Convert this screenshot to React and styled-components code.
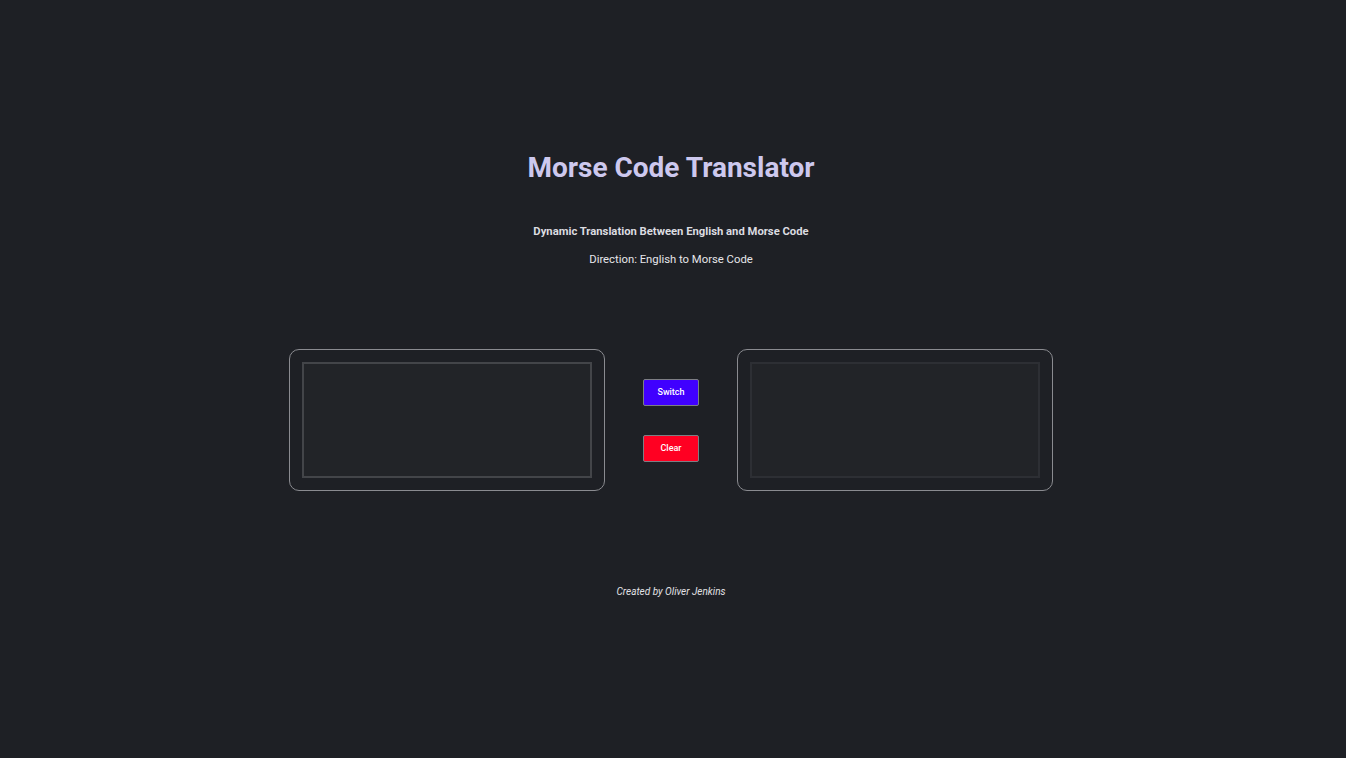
import React, { useState } from "react";
import styled, { createGlobalStyle } from "styled-components";

const MORSE = {
  a: ".-", b: "-...", c: "-.-.", d: "-..", e: ".", f: "..-.", g: "--.", h: "....",
  i: "..", j: ".---", k: "-.-", l: ".-..", m: "--", n: "-.", o: "---", p: ".--.",
  q: "--.-", r: ".-.", s: "...", t: "-", u: "..-", v: "...-", w: ".--", x: "-..-",
  y: "-.--", z: "--..", 0: "-----", 1: ".----", 2: "..---", 3: "...--", 4: "....-",
  5: ".....", 6: "-....", 7: "--...", 8: "---..", 9: "----.", " ": "/",
};
const REVERSE = Object.fromEntries(Object.entries(MORSE).map(([k, v]) => [v, k]));

const Global = createGlobalStyle`
  html, body { margin: 0; padding: 0; background: #1e2025; }
  body { font-family: Roboto, "Liberation Sans", Arial, sans-serif; }
  * { box-sizing: border-box; }
`;

const Page = styled.div`
  min-height: 100vh;
  background: #1e2025;
  display: flex;
  flex-direction: column;
  align-items: center;
  padding-right: 4px;
  color: #e4e4e8;
`;

const Title = styled.h1`
  margin: 151px 0 0;
  font-size: 28px;
  line-height: 34px;
  font-weight: 700;
  color: #cdc8ee;
`;

const Subtitle = styled.p`
  margin: ${(p) => p.$top}px 0 0;
  font-size: ${(p) => p.$size}px;
  line-height: 14px;
  font-weight: ${(p) => (p.$bold ? 700 : 400)};
  color: ${(p) => (p.$bold ? "#dcdce0" : "#e6e6ea")};
`;

const Workspace = styled.div`
  margin-top: 82px;
  display: flex;
  align-items: center;
  gap: 38px;
`;

const Panel = styled.div`
  width: 316px;
  height: 142px;
  padding: 12px;
  border: 1px solid #8a8b90;
  border-radius: 10px;
  background: #1e2025;
`;

const Area = styled.textarea`
  display: block;
  width: 100%;
  height: 100%;
  resize: none;
  background: #222428;
  border: 2px solid ${(p) => (p.$muted ? "#2d2f34" : "#434549")};
  color: #e4e4e8;
  font-family: Roboto, "Liberation Sans", Arial, sans-serif;
  font-size: 12px;
  padding: 6px;
  outline: none;
`;

const Controls = styled.div`
  display: flex;
  flex-direction: column;
  gap: 29px;
`;

const Button = styled.button`
  width: 56px;
  height: 27px;
  padding: 0;
  border: 1px solid #7d7e84;
  border-radius: 2px;
  background: ${(p) => p.$bg};
  color: #ffffff;
  font-family: Roboto, "Liberation Sans", Arial, sans-serif;
  font-size: 9px;
  font-weight: 500;
  cursor: pointer;
`;

const Footer = styled.p`
  margin: 95px 0 0;
  font-size: 10px;
  line-height: 12px;
  font-style: italic;
  color: #e2e2e6;
`;

export default function App() {
  const [toMorse, setToMorse] = useState(true);
  const [input, setInput] = useState("");

  const output = toMorse
    ? input.toLowerCase().split("").map((c) => MORSE[c] || "").join(" ")
    : input.trim().split(" ").map((c) => REVERSE[c] || "").join("");

  return (
    <>
      <Global />
      <Page>
        <Title>Morse Code Translator</Title>
        <Subtitle $bold $size={11.25} $top={40}>Dynamic Translation Between English and Morse Code</Subtitle>
        <Subtitle $size={11.3} $top={14}>
          Direction: {toMorse ? "English to Morse Code" : "Morse Code to English"}
        </Subtitle>
        <Workspace>
          <Panel>
            <Area value={input} onChange={(e) => setInput(e.target.value)} />
          </Panel>
          <Controls>
            <Button $bg="#4000ff" onClick={() => { setToMorse(!toMorse); setInput(""); }}>Switch</Button>
            <Button $bg="#ff0022" onClick={() => setInput("")}>Clear</Button>
          </Controls>
          <Panel>
            <Area $muted readOnly value={output} />
          </Panel>
        </Workspace>
        <Footer>Created by Oliver Jenkins</Footer>
      </Page>
    </>
  );
}
